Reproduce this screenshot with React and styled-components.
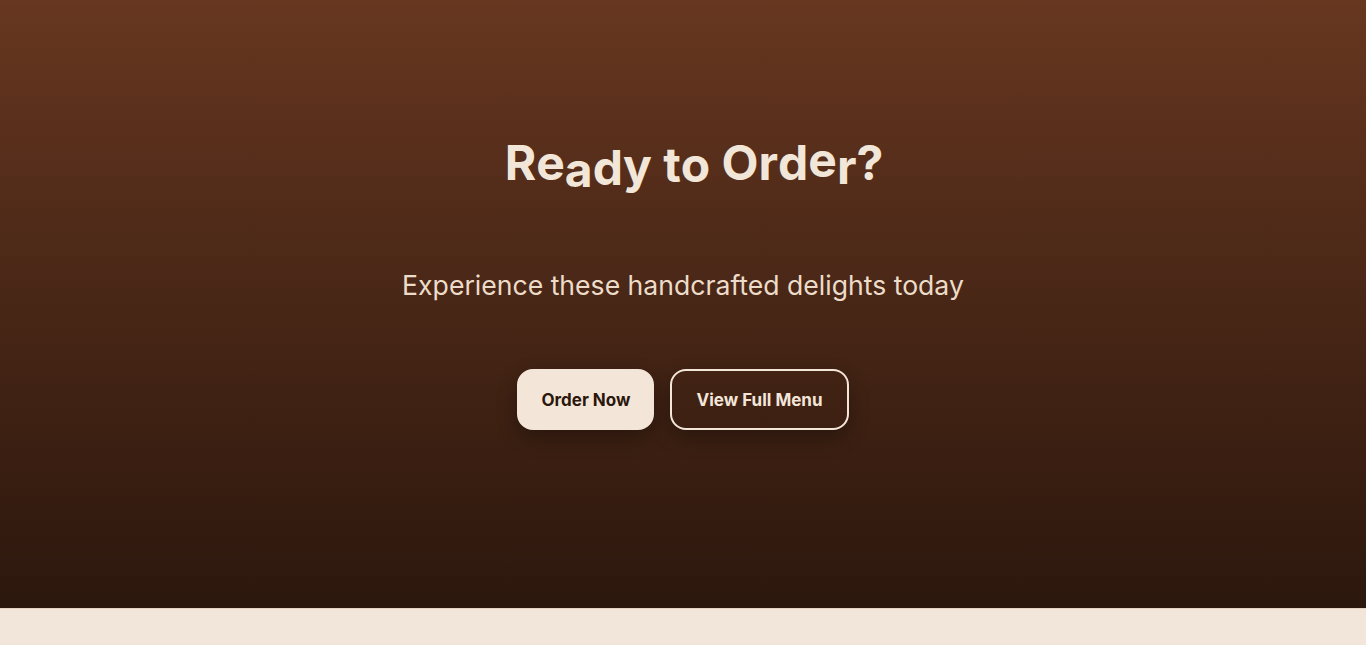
import React from "react";
import styled, { createGlobalStyle } from "styled-components";

const Global = createGlobalStyle`
  html, body { margin: 0; padding: 0; }
  body {
    background: #f2e6da;
    font-family: Inter, "Noto Sans", "Liberation Sans", sans-serif;
  }
`;

const Page = styled.div`
  min-height: 645px;
  background: #f2e6da;
`;

const Hero = styled.section`
  height: 609px;
  box-sizing: border-box;
  border-bottom: 1px solid #e6d3bf;
  background: linear-gradient(180deg, #673720 0%, #4b2817 45%, #2c170d 100%);
  display: flex;
  flex-direction: column;
  align-items: center;
  padding-top: 134px;
`;

const Title = styled.h2`
  margin: 0;
  padding-left: 22px;
  font-size: 48px;
  font-weight: 700;
  line-height: 1.2;
  color: #f2e6d9;
  letter-spacing: 0;
  white-space: pre;
`;

const Letter = styled.span`
  display: inline-block;
  transform: translateY(${(p) => p.$dy}px);
`;

const Subtitle = styled.p`
  margin: 76px 0 0;
  font-size: 26.6px;
  font-weight: 400;
  color: #ecdcc9;
  line-height: 1.3;
`;

const Actions = styled.div`
  display: flex;
  gap: 16px;
  margin-top: 67px;
`;

const Button = styled.button`
  font-family: Inter, "Noto Sans", "Liberation Sans", sans-serif;
  font-size: 17px;
  font-weight: 700;
  height: 61px;
  padding: 0 ${(p) => (p.$outline ? "24px" : "22px")};
  border-radius: 16px;
  cursor: pointer;
  box-shadow: 0 8px 20px rgba(0, 0, 0, 0.3);
  border: 2px solid #f3e6d9;
  background: ${(p) => (p.$outline ? "transparent" : "#f3e6d9")};
  color: ${(p) => (p.$outline ? "#f3e6d9" : "#2c170c")};
`;

const letters = [
  ["R", 0], ["e", 0], ["a", 7], ["d", 5], ["y", 3], [" ", 0],
  ["t", 2], ["o", 2], [" ", 0],
  ["O", 0], ["r", 0], ["d", 0], ["e", -3], ["r", 4], ["?", 0],
];

export default function App() {
  return (
    <Page>
      <Global />
      <Hero>
        <Title>
          {letters.map(([ch, dy], i) => (
            <Letter key={i} $dy={dy}>{ch}</Letter>
          ))}
        </Title>
        <Subtitle>Experience these handcrafted delights today</Subtitle>
        <Actions>
          <Button>Order Now</Button>
          <Button $outline>View Full Menu</Button>
        </Actions>
      </Hero>
    </Page>
  );
}
